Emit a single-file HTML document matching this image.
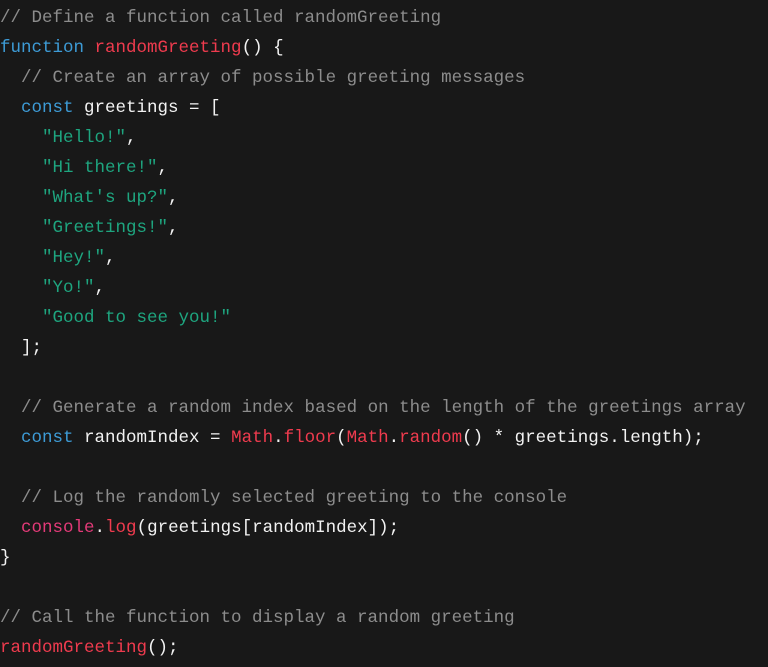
<!DOCTYPE html>
<html><head><style>
html,body{margin:0;padding:0;background:#181818;width:768px;height:667px;overflow:hidden}
pre{margin:0;padding:3px 0 0 0;font-family:"Liberation Mono",monospace;font-size:17.5px;line-height:30px;color:#f2f2f2;white-space:pre}
.c{color:#8c8c8c}.k{color:#3d9bd6}.f{color:#ef3b4e}.s{color:#1ea57f}.p{color:#e33a78}
</style></head><body><pre><span class="c">// Define a function called randomGreeting</span>
<span class="k">function</span> <span class="f">randomGreeting</span>() {
  <span class="c">// Create an array of possible greeting messages</span>
  <span class="k">const</span> greetings = [
    <span class="s">"Hello!"</span>,
    <span class="s">"Hi there!"</span>,
    <span class="s">"What's up?"</span>,
    <span class="s">"Greetings!"</span>,
    <span class="s">"Hey!"</span>,
    <span class="s">"Yo!"</span>,
    <span class="s">"Good to see you!"</span>
  ];

  <span class="c">// Generate a random index based on the length of the greetings array</span>
  <span class="k">const</span> randomIndex = <span class="f">Math</span>.<span class="f">floor</span>(<span class="f">Math</span>.<span class="f">random</span>() * greetings.length);

  <span class="c">// Log the randomly selected greeting to the console</span>
  <span class="p">console</span>.<span class="f">log</span>(greetings[randomIndex]);
}

<span class="c">// Call the function to display a random greeting</span>
<span class="f">randomGreeting</span>();
</pre></body></html>
